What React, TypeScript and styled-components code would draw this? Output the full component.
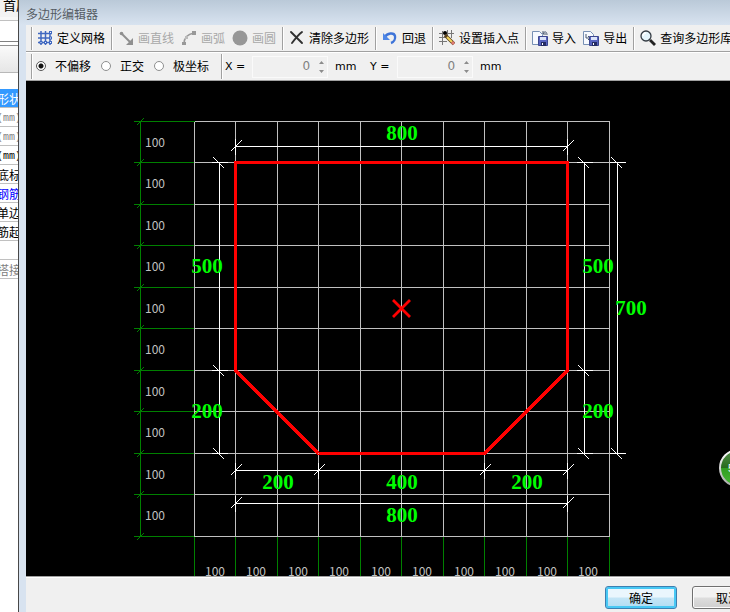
import React from "react";
import styled, { createGlobalStyle } from "styled-components";

const GlobalStyle = createGlobalStyle`
  * { box-sizing: border-box; }
  html, body { margin: 0; padding: 0; }
  body {
    background: #f0f0f0;
    color: #000;
    font-family: "Liberation Sans", "Noto Sans CJK SC", sans-serif;
    font-size: 12px;
    line-height: 16px;
    overflow: hidden;
  }
  button, input { font: inherit; color: inherit; }
`;

const Screen = styled.div`
  display: flex;
  height: 100vh;
  overflow: hidden;
`;

/* Property list of the window behind the dialog */
const Sidebar = styled.aside`
  flex: none;
  width: 18px;
  overflow: hidden;
  background: #fff;
  white-space: nowrap;
`;

const SidebarTop = styled.div`
  height: 20px;
  padding-left: 3px;
  background: #f3f3f3;
  border-bottom: 3px solid #f8f8f8;
  font-size: 13px;
  line-height: 12px;
`;

const SidebarField = styled.div`
  height: 22px;
  border-top: 1px solid #c0c0c0;
  border-bottom: 1px solid #808080;
`;

const SidebarHeader = styled.div`
  height: 28px;
  margin-top: 3px;
  border-top: 1px solid #909090;
  border-bottom: 1px solid #b8b8b8;
  background: linear-gradient(#fafafa, #e6e6e6);
`;

const PropertyList = styled.ul`
  margin: 0;
  padding: 16px 0 0;
  list-style: none;
`;

const PropertyRow = styled.li<{ $color?: string; $selected?: boolean; $mono?: boolean }>`
  display: flex;
  align-items: center;
  justify-content: center;
  height: 19px;
  padding-top: 3px;
  border-bottom: 1px solid #c0c0c0;
  background: ${(p) => (p.$selected ? "#3399ff" : "#fff")};
  color: ${(p) => p.$color ?? "#000"};
  font-family: ${(p) => (p.$mono ? '"Liberation Mono", monospace' : "inherit")};
  font-size: ${(p) => (p.$mono ? "10px" : "12px")};
`;

const Dialog = styled.main`
  flex: 1;
  min-width: 0;
  display: flex;
  flex-direction: column;
  border-left: 1px solid #484848;
  background: linear-gradient(#bac9d8, #d8e3f0 25px);
`;

const TitleBar = styled.h1`
  flex: none;
  height: 25px;
  margin: 0;
  padding: 7px 7px 0;
  color: #555c64;
  font-size: 12px;
  font-weight: 400;
  line-height: 16px;
`;

const Content = styled.div`
  flex: 1;
  min-height: 0;
  margin-left: 7px;
  display: flex;
  flex-direction: column;
  background: #f0f0f0;
`;

const Bar = styled.div<{ $height: number }>`
  flex: none;
  display: flex;
  align-items: center;
  gap: 1px;
  height: ${(p) => p.$height}px;
  padding-left: 5px;
  border-bottom: 1px solid #a0a0a0;
  box-shadow: 0 1px #fff;
  overflow: hidden;
  white-space: nowrap;
`;

const Divider = styled.span`
  flex: none;
  align-self: stretch;
  width: 1px;
  margin: 2px 2px 1px;
  background: #a0a0a0;
  box-shadow: 1px 0 #fff;
`;

const Grip = styled(Divider)`
  margin-left: 0;
  margin-right: 1px;
`;

const ToolButton = styled.button`
  flex: none;
  display: flex;
  align-items: center;
  gap: 4px;
  padding: 2px 3px 0;
  border: 0;
  background: none;
  &:disabled { color: #a8a8a8; }
  svg { flex: none; display: block; margin-bottom: 2px; }
`;

const RadioLabel = styled.label`
  flex: none;
  display: flex;
  align-items: center;
  gap: 9px;
  padding-top: 2px;
`;

const Radio = styled.input`
  appearance: none;
  width: 10px;
  height: 10px;
  margin: 0 0 2px;
  border: 1px solid #8e8f8f;
  border-radius: 50%;
  background: #fff;
  &:checked { background: radial-gradient(circle, #111 0 2px, #fff 3px); border-color: #555; }
`;

const RadioSet = styled.div`
  display: flex;
  align-items: center;
  gap: 10px;
  margin-left: 2px;
  margin-right: 9px;
`;

const Coordinate = styled.div`
  flex: none;
  display: flex;
  align-items: center;
  width: 144px;
  padding-top: 1px;
  font-family: "DejaVu Sans", sans-serif;
  font-size: 11px;
`;

const CoordinateLabel = styled.label`
  width: 27px;
`;

const SpinBox = styled.span`
  display: flex;
  align-items: center;
  width: 76px;
  height: 22px;
  margin-right: 7px;
  padding-right: 2px;
  border: 1px solid #fafafa;
`;

const NumberInput = styled.input`
  flex: 1;
  min-width: 0;
  padding: 0 8px 2px 0;
  border: 0;
  background: none;
  color: #808080;
  font-size: 12px;
  text-align: right;
`;

const CanvasArea = styled.div`
  position: relative;
  flex: 1;
  min-height: 0;
  overflow: hidden;
  background: #000;
  > svg { display: block; }
`;

const Badge = styled.div`
  position: absolute;
  right: -27px;
  bottom: 89px;
  svg { display: block; }
`;

const Footer = styled.footer`
  flex: none;
  display: flex;
  justify-content: flex-end;
  gap: 15px;
  margin-right: -34px;
  padding: 8px 0 3px;
  border-top: 1px solid #a0a0a0;
  box-shadow: inset 0 1px #fff;
  height: 36px;
`;

const PushButton = styled.button<{ $primary?: boolean }>`
  width: 72px;
  height: 23px;
  margin-top: 1px;
  padding: 2px 0 0;
  border: 1px solid ${(p) => (p.$primary ? "#3c7fb1" : "#707070")};
  border-radius: 3px;
  background: ${(p) =>
    p.$primary
      ? "linear-gradient(#eaf6fd 0 48%, #c4e5f6 52%, #b0dcf2)"
      : "linear-gradient(#f2f2f2 0 48%, #dddddd 52%, #cfcfcf)"};
  box-shadow: inset 0 0 0 ${(p) => (p.$primary ? "2px #48c8f4" : "1px #fcfcfc")};
`;

const CadSmall = { fontFamily: '"Noto Sans CJK SC", sans-serif', fontSize: 12, fill: "#c0c0c0" };
const CadBold = {
  fontFamily: '"Liberation Serif", serif',
  fontSize: 21,
  fontWeight: 700,
  fill: "#00ff00",
  textAnchor: "middle" as const,
};

const Icon = ({ children }: { children: React.ReactNode }) => (
  <svg width="16" height="16" viewBox="0 0 16 16" fill="none" aria-hidden="true">
    {children}
  </svg>
);

const GridIcon = () => (
  <Icon>
    <path d="M4 1v14M8.500 1v14M13 1v14M1 3.500h14M1 8h14M1 12.500h14" stroke="#4068c0" strokeWidth="1.500" />
    <path d="M12 1h3v3h-3zM12 6.500h3v3h-3zM12 11h3v3h-3zM2.500 11h3v3h-3zM7 11h3v3H7z" fill="#4068c0" />
    <path d="M13 2h1v1h-1zM13 7.500h1v1h-1zM13 12h1v1h-1zM3.500 12h1v1h-1zM8 12h1v1H8z" fill="#e8eefc" />
  </Icon>
);
const LineIcon = () => (
  <Icon>
    <path d="M3 3l9 9" stroke="#909090" strokeWidth="2" />
    <circle cx="3.500" cy="3.500" r="1.800" fill="#909090" />
    <path d="M15 8v7H8z" fill="#909090" />
  </Icon>
);
const ArcIcon = () => (
  <Icon>
    <path d="M3 14C3 8 7 4 13 3" stroke="#999" strokeWidth="1.500" />
    <path d="M1 12h4v3H1zM11 1h4v4h-4z" fill="#999" />
    <path d="M4 6h3v3H4z" fill="#bbb" />
  </Icon>
);
const CircleIcon = () => (
  <Icon>
    <circle cx="8" cy="8" r="7.500" fill="#979797" />
  </Icon>
);
const ClearIcon = () => (
  <Icon>
    <path d="M2 2c4 4 7 7 11 11M13 2C9 5 6 9 3 13" stroke="#303030" strokeWidth="1.900" strokeLinecap="round" />
  </Icon>
);
const UndoIcon = () => (
  <Icon>
    <path d="M3 7c2-4 9-5 10-1 .6 3-1 6-4 7" stroke="#3e74d8" strokeWidth="2.400" />
    <path d="M1 3v7h7z" fill="#4f87e6" />
  </Icon>
);
const InsertIcon = () => (
  <Icon>
    <path d="M3.500 1v14M8.500 0v8M12.500 0v8M0 3.500h15M0 7.500h9M0 11.500h8" stroke="#777" />
    <circle cx="6" cy="3" r="2" fill="#000" />
    <path d="M6 5l9 9" stroke="#5b4320" strokeWidth="3.500" />
    <path d="M8 7l5 5" stroke="#f4d65c" strokeWidth="2" />
    <path d="M13 12l2 2" stroke="#e07a74" strokeWidth="3" />
  </Icon>
);
const Disk = () => (
  <>
    <path d="M6.500 6.500h9v9h-9z" fill="#5864c0" stroke="#3d478f" />
    <path d="M8 7h6v3H8z" fill="#dce4fa" />
    <path d="M9 12h5v4H9z" fill="#252c63" />
    <path d="M10 13h1v2h-1z" fill="#fff" />
  </>
);
const ImportIcon = () => (
  <Icon>
    <path d="M.5 1.500h7l3 3v10H.5z" fill="#f7faff" stroke="#7891b5" />
    <Disk />
    <path d="M11 1v3h3M11 4c1-3 4-3 4 1" stroke="#46566f" />
  </Icon>
);
const ExportIcon = () => (
  <Icon>
    <path d="M.5 1.500h7l3 3v10H.5z" fill="#f7faff" stroke="#7891b5" />
    <path d="M3 4v4h4M5 6l2 2-2 2" stroke="#46566f" />
    <Disk />
  </Icon>
);
const SearchIcon = () => (
  <Icon>
    <circle cx="6" cy="6" r="5" fill="#e4f4fb" stroke="#343b43" strokeWidth="1.300" />
    <path d="M3 6c0-2 1-3 3-3" stroke="#fff" strokeWidth="1.500" />
    <path d="M10 10l5 5" stroke="#222" strokeWidth="2.800" />
  </Icon>
);
const SpinArrows = () => (
  <svg width="7" height="14" viewBox="0 0 7 14" aria-hidden="true">
    <path d="M1 4l2.500-3L6 4zM1 10l2.500 3L6 10z" fill="#8c8c8c" />
  </svg>
);

const STEP = 41.5;
const GRID_LEFT = 168;
const GRID_TOP = 40;
const gx = (i: number) => Math.floor(GRID_LEFT + STEP * i);
const gy = (i: number) => Math.floor(GRID_TOP + STEP * i);
const marks = Array.from({ length: 11 }, (_, i) => i);
const cells = marks.slice(0, 10);

function HorizontalDimension({ y, stops }: { y: number; stops: number[] }) {
  const d = stops.map((i) => `M${gx(i)} ${y - 8}v16M${gx(i) - 5} ${y + 5}l11-11`).join("");
  return <path d={`M${gx(stops[0])} ${y}H${gx(stops[stops.length - 1])}${d}`} />;
}

function VerticalDimension({ x, stops }: { x: number; stops: number[] }) {
  const d = stops.map((i) => `M${x - 8} ${gy(i)}h16M${x - 6} ${gy(i) - 5}l11 11`).join("");
  return <path d={`M${x} ${gy(stops[0])}V${gy(stops[stops.length - 1])}${d}`} />;
}

const outline = [[1, 1], [9, 1], [9, 6], [7, 8], [3, 8], [1, 6]]
  .map(([x, y]) => `${gx(x)},${gy(y)}`)
  .join(" ");

const dimensionLabels: [string, number, number][] = [
  ["800", 376, 59],
  ["500", 181, 192],
  ["200", 181, 337],
  ["500", 572, 192],
  ["200", 572, 337],
  ["700", 605, 234],
  ["200", 252, 408],
  ["400", 376, 408],
  ["200", 501, 408],
  ["800", 376, 441],
];

function Drawing() {
  return (
    <svg width="704" height="495" viewBox="0 0 704 495" role="img" aria-label="多边形">
      <g transform="translate(.5 .5)" fill="none" shapeRendering="crispEdges">
        <g stroke="#008000">
          <path d={`M114 ${gy(0)}V${gy(10)}`} />
          {marks.map((i) => (
            <path key={i} d={`M107 ${gy(i)}H${gx(0)}M110 ${gy(i) + 4}l7-7M${gx(i)} ${gy(10)}V494`} />
          ))}
        </g>
        <g stroke="#c0c0c0">
          {marks.map((i) => (
            <path key={i} d={`M${gx(0)} ${gy(i)}H${gx(10)}M${gx(i)} ${gy(0)}V${gy(10)}`} />
          ))}
        </g>
        <g stroke="#fff">
          <HorizontalDimension y={65} stops={[1, 9]} />
          <HorizontalDimension y={389} stops={[1, 3, 7, 9]} />
          <HorizontalDimension y={422} stops={[1, 9]} />
          <VerticalDimension x={193} stops={[1, 6, 8]} />
          <VerticalDimension x={558} stops={[1, 6, 8]} />
          <VerticalDimension x={591} stops={[1, 8]} />
        </g>
        <polygon points={outline} stroke="#f00" strokeWidth="3" />
      </g>
      <path d="M367 219l17 17M384 219l-17 17" stroke="#f00" strokeWidth="2.800" />
      <g {...CadSmall}>
        {cells.map((i) => (
          <text key={i} x="119" y={gy(i) + 26}>100</text>
        ))}
        {cells.map((i) => (
          <text key={i} x={gx(i) + 11} y="495">100</text>
        ))}
      </g>
      <g {...CadBold}>
        {dimensionLabels.map(([value, x, y]) => (
          <text key={`${x}-${y}`} x={x} y={y}>{value}</text>
        ))}
      </g>
    </svg>
  );
}

function SpeedBall() {
  return (
    <svg width="38" height="38" viewBox="0 0 38 38">
      <defs>
        <linearGradient id="ring" x2="0" y2="1">
          <stop stopColor="#fff" />
          <stop offset="1" stopColor="#aaa" />
        </linearGradient>
        <linearGradient id="leaf" x2="0" y2="1">
          <stop stopColor="#57914d" />
          <stop offset=".5" stopColor="#276b1b" />
          <stop offset=".5" stopColor="#319d20" />
          <stop offset="1" stopColor="#49b936" />
        </linearGradient>
      </defs>
      <circle cx="19" cy="19" r="18" fill="url(#leaf)" stroke="url(#ring)" strokeWidth="2" />
      <text x="9" y="23" fill="#fff" fontFamily="Liberation Sans, sans-serif" fontSize="11">5</text>
    </svg>
  );
}

function Axis({ name }: { name: string }) {
  const id = `offset-${name}`;
  return (
    <Coordinate>
      <CoordinateLabel htmlFor={id}>{name} =</CoordinateLabel>
      <SpinBox>
        <NumberInput id={id} defaultValue="0" disabled />
        <SpinArrows />
      </SpinBox>
      <span>mm</span>
    </Coordinate>
  );
}

export default function App() {
  return (
    <>
      <GlobalStyle />
      <Screen>
        <Sidebar>
          <SidebarTop>首层</SidebarTop>
          <SidebarField />
          <SidebarHeader />
          <PropertyList>
            <PropertyRow $selected $color="#fff">形状</PropertyRow>
            <PropertyRow $mono $color="#808080">(mm)</PropertyRow>
            <PropertyRow $mono $color="#808080">(mm)</PropertyRow>
            <PropertyRow $mono>(mm)</PropertyRow>
            <PropertyRow>底标</PropertyRow>
            <PropertyRow $color="#0000ff">钢筋</PropertyRow>
            <PropertyRow>单边</PropertyRow>
            <PropertyRow>筋起</PropertyRow>
            <PropertyRow />
            <PropertyRow $color="#808080">搭接</PropertyRow>
          </PropertyList>
        </Sidebar>
        <Dialog>
          <TitleBar>多边形编辑器</TitleBar>
          <Content>
            <Bar $height={27}>
              <Grip />
              <ToolButton><GridIcon />定义网格</ToolButton>
              <Divider />
              <ToolButton disabled><LineIcon />画直线</ToolButton>
              <ToolButton disabled><ArcIcon />画弧</ToolButton>
              <ToolButton disabled><CircleIcon />画圆</ToolButton>
              <Divider />
              <ToolButton><ClearIcon />清除多边形</ToolButton>
              <Divider />
              <ToolButton><UndoIcon />回退</ToolButton>
              <Divider />
              <ToolButton><InsertIcon />设置插入点</ToolButton>
              <Divider />
              <ToolButton><ImportIcon />导入</ToolButton>
              <ToolButton><ExportIcon />导出</ToolButton>
              <Divider />
              <ToolButton><SearchIcon />查询多边形库</ToolButton>
            </Bar>
            <Bar $height={29}>
              <Grip />
              <RadioSet role="radiogroup" aria-label="偏移">
                <RadioLabel><Radio type="radio" name="mode" defaultChecked />不偏移</RadioLabel>
                <RadioLabel><Radio type="radio" name="mode" />正交</RadioLabel>
                <RadioLabel><Radio type="radio" name="mode" />极坐标</RadioLabel>
              </RadioSet>
              <Divider />
              <Axis name="X" />
              <Axis name="Y" />
            </Bar>
            <CanvasArea>
              <Drawing />
              <Badge><SpeedBall /></Badge>
            </CanvasArea>
            <Footer>
              <PushButton $primary>确定</PushButton>
              <PushButton>取消</PushButton>
            </Footer>
          </Content>
        </Dialog>
      </Screen>
    </>
  );
}
